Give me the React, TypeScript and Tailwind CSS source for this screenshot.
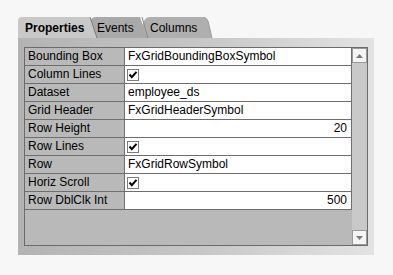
import { ReactNode } from "react";

type Row = {
  label: string;
  value?: string;
  check?: boolean;
  num?: boolean;
};

const rows: Row[] = [
  { label: "Bounding Box", value: "FxGridBoundingBoxSymbol" },
  { label: "Column Lines", check: true },
  { label: "Dataset", value: "employee_ds" },
  { label: "Grid Header", value: "FxGridHeaderSymbol" },
  { label: "Row Height", value: "20", num: true },
  { label: "Row Lines", check: true },
  { label: "Row", value: "FxGridRowSymbol" },
  { label: "Horiz Scroll", check: true },
  { label: "Row DblClk Int", value: "500", num: true },
];

function CheckBox() {
  return (
    <span className="flex h-[12px] w-[12px] items-center justify-center border border-[#7c7c7c] bg-white">
      <svg width="10" height="10" viewBox="0 0 10 10">
        <path d="M1.5 4.5 L3.8 7.2 L8.5 1.8" fill="none" stroke="#000" strokeWidth="2" />
      </svg>
    </span>
  );
}

function ScrollButton({ children }: { children: ReactNode }) {
  return (
    <div className="flex h-[15px] w-[15px] items-center justify-center border border-[#9a9a9a] bg-[#f4f4f4]">
      {children}
    </div>
  );
}

export default function App() {
  return (
    <div className="h-[275px] w-[393px] bg-[#f7f7f7] pl-[18px] pt-[17px] font-['Liberation_Sans',Arial,sans-serif] text-[12px] text-black">
      {/* Tabs */}
      <div className="relative h-[21px] w-[356px]">
        <svg className="absolute inset-0" width="356" height="21" viewBox="0 0 356 21">
          <path d="M120 21 L126 4 Q128 0 132 0 L185 0 Q188 0 190 4 L194 21 Z" fill="#afafaf" />
          <path d="M124 0 L130 21" stroke="#8a8a8a" strokeWidth="1" />
          <path d="M185 0.5 Q188.5 0.5 190 4 L194 21" fill="none" stroke="#9c9c9c" strokeWidth="1" />
          <path d="M66 21 L72 4 Q74 0 78 0 L122 0 L129 21 Z" fill="#a9a9a9" />
          <path d="M0 21 L0 4 Q0 0 4 0 L72 0 L79 21 Z" fill="#c8c8c8" />
          <path d="M72 0 L79 21" stroke="#7e7e7e" strokeWidth="1" />
        </svg>
        <div className="relative flex h-full items-center">
          <span className="w-[79px] pl-[7px] pt-[1px] font-bold">Properties</span>
          <span className="w-[53px] pt-[1px]">Events</span>
          <span className="pt-[1px]">Columns</span>
        </div>
      </div>

      {/* Panel */}
      <div className="h-[217px] w-[356px] bg-gradient-to-r from-[#b3b3b3] via-[#c6c6c6] to-[#e3e3e3] pl-[6px] pt-[9px]">
        <div className="flex h-[199px] w-[344px] border border-[#6b6b6b] bg-[#b9b9b9]">
          <div className="w-[327px]">
            {rows.map((r) => (
              <div key={r.label} className="flex h-[18px] border-b border-[#6e6e6e]">
                <div className="w-[100px] border-r border-[#6e6e6e] pl-[3px] leading-[17px]">{r.label}</div>
                <div
                  className={
                    r.num
                      ? "w-[227px] border-r border-[#6e6e6e] bg-white pr-[4px] text-right leading-[17px]"
                      : "flex w-[227px] items-center border-r border-[#6e6e6e] bg-white pl-[2px] leading-[17px]"
                  }
                >
                  {r.check ? <CheckBox /> : <span className="pl-[1px]">{r.value}</span>}
                </div>
              </div>
            ))}
          </div>
          <div className="flex w-[15px] flex-col justify-between bg-[#c9c9c9]">
            <ScrollButton>
              <svg width="7" height="4" viewBox="0 0 7 4">
                <path d="M3.5 0 L7 4 L0 4 Z" fill="#7a7a7a" />
              </svg>
            </ScrollButton>
            <ScrollButton>
              <svg width="7" height="4" viewBox="0 0 7 4">
                <path d="M0 0 L7 0 L3.5 4 Z" fill="#7a7a7a" />
              </svg>
            </ScrollButton>
          </div>
        </div>
      </div>
    </div>
  );
}
